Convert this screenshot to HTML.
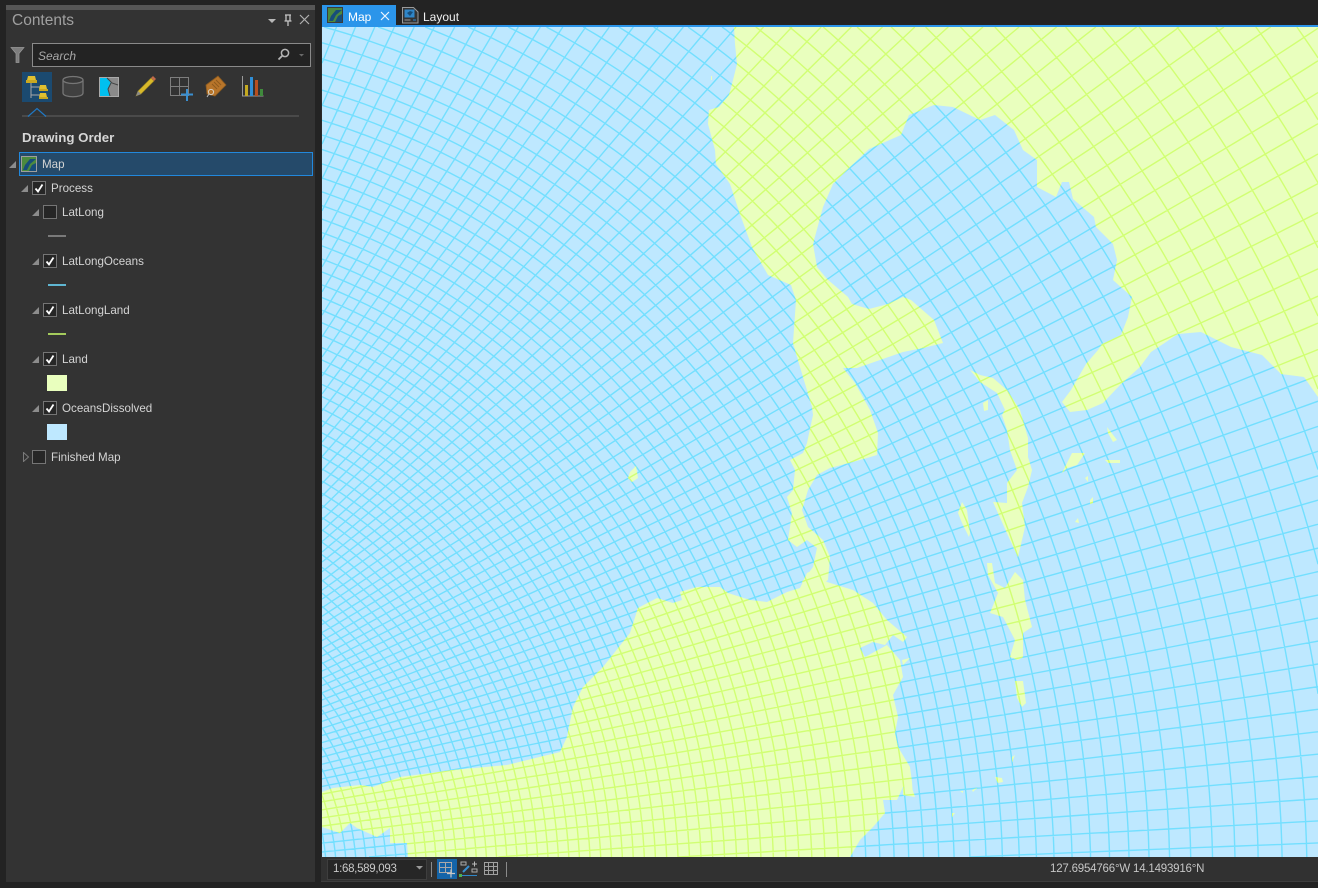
<!DOCTYPE html>
<html><head><meta charset="utf-8"><title>Contents</title>
<style>
html,body{margin:0;padding:0;background:#232323;width:1318px;height:888px;overflow:hidden;}
#root{position:relative;width:1318px;height:888px;overflow:hidden;background:#232323;font-family:"Liberation Sans",sans-serif;font-size:11.6px;color:#d4d4d4;}
.a{position:absolute;}
.t{position:absolute;white-space:nowrap;line-height:16px;}
.cb{position:absolute;width:12px;height:12px;border:1px solid #757575;background:#262626;}
.cb svg{position:absolute;left:0;top:0;}
.exp{position:absolute;width:0;height:0;border-style:solid;border-width:0 0 7px 7px;border-color:transparent transparent #8c8c8c transparent;}
</style></head>
<body><div id="root">
<!-- panel -->
<div class="a" style="left:6px;top:5px;width:309px;height:877px;background:#333333;"></div>
<div class="a" style="left:6px;top:5px;width:309px;height:5px;background:#565656;"></div>
<div class="t" style="left:12px;top:13px;font-size:15.5px;color:#a0a0a0;">Contents</div>
<svg class="a" style="left:266px;top:12px;" width="48" height="16" viewBox="0 0 48 16">
<path d="M2 7h8l-4 4z" fill="#b8b8b8"/>
<path d="M19 3h6M20 3v6M24 3v6M18.500 9h7M22 9v5" stroke="#c4c4c4" stroke-width="1.300" fill="none"/>
<path d="M34 3l9 9M43 3l-9 9" stroke="#b0b0b0" stroke-width="1.200" fill="none"/>
</svg>
<!-- filter + search -->
<svg class="a" style="left:10px;top:46px;" width="16" height="18" viewBox="0 0 16 18"><path d="M1 1.500h13l-5 6v9h-3v-9z" fill="#7d7d7d" stroke="#9a9a9a" stroke-width=".7"/></svg>
<div class="a" style="left:32px;top:43px;width:277px;height:22px;background:#232323;border:1px solid #8a8a8a;"></div>
<div class="t" style="left:38px;top:48px;font-style:italic;color:#a8a8a8;font-size:12px;">Search</div>
<svg class="a" style="left:276px;top:47px;" width="32" height="16" viewBox="0 0 32 16"><circle cx="9" cy="6" r="3.600" fill="none" stroke="#b5b5b5" stroke-width="1.500"/><path d="M6.500 8.500l-4 4" stroke="#b5b5b5" stroke-width="1.800"/><path d="M23 7h5l-2.500 2.500z" fill="#6a6a6a"/></svg>
<!-- icon row -->
<div class="a" style="left:22px;top:72px;width:30px;height:30px;background:#1b4a70;"></div>
<svg class="a" style="left:22px;top:72px;" width="250" height="30" viewBox="0 0 250 30">
<path d="M9 9v19M9 17h9M9 25h9" stroke="#a8a8a8" stroke-width="1" fill="none" transform="translate(0,-2)"/>
<path d="M5 8l1-4h7l1 4z" fill="#e0c030"/><path d="M4 8h11v3H4z" fill="#c9a820"/>
<path d="M17 17l1-4h6l1 4z" fill="#e0c030"/><path d="M17 17h9v2h-9z" fill="#c9a820"/>
<path d="M17 25l1-4h6l1 4z" fill="#e0c030"/><path d="M17 25h9v2h-9z" fill="#c9a820"/>
<!-- db -->
<path d="M41 8v13c0 5 20 5 20 0V8" fill="#404040" stroke="#767676" stroke-width="1.300"/>
<ellipse cx="51" cy="8" rx="10" ry="3.500" fill="#383838" stroke="#767676" stroke-width="1.300"/>
<!-- source -->
<rect x="77.500" y="5.500" width="19" height="19" fill="#8a8a8a" stroke="#aaaaaa"/>
<path d="M78 6h8l3 6-3 5 2 7H78z" fill="#00c0f0"/>
<path d="M85 6l5 5 6 2M89 11l-3 6 2 7" stroke="#444" stroke-width="1" fill="none"/>
<!-- pencil -->
<path d="M114 24l2-5 13-13 3 3-13 13z" fill="#d9b92a" stroke="#8c7a20" stroke-width=".6"/>
<path d="M129 6l2-2 3 3-2 2z" fill="#c06a4a"/><path d="M114 24l2-5 3 3z" fill="#8a8a8a"/>
<!-- grid plus -->
<path d="M148.500 5.500h18v18h-18zM148.500 14.500h18M157.500 5.500v18" stroke="#7e7e7e" stroke-width="1" fill="#333"/>
<path d="M159 23.500h12M165 18v12" stroke="#3a8fd0" stroke-width="2" fill="none" transform="translate(0,-1)"/>
<!-- tag -->
<path d="M184 14l12-9 8 9-11 11-8-2z" fill="#b8752a" stroke="#8a5a20" stroke-width=".8" transform="translate(0,-1)"/>
<path d="M192 10l5 5M190 12l5 5M194 8l5 5" stroke="#8f5a1e" stroke-width="1"/>
<circle cx="189" cy="20" r="2.600" fill="none" stroke="#d8d0c0" stroke-width="1"/><path d="M187 22l-2 3" stroke="#bbb" stroke-width="1"/>
<!-- chart -->
<path d="M220.500 4v20h21" stroke="#9a9a9a" stroke-width="1" fill="none"/>
<rect x="223" y="13" width="3" height="11" fill="#c4a920"/><rect x="228" y="5" width="3" height="19" fill="#2f8fd8"/><rect x="233" y="8" width="3" height="16" fill="#b84f20"/><rect x="238" y="17" width="3" height="7" fill="#3f8a3c"/>
</svg>
<div class="a" style="left:22px;top:115px;width:277px;height:2px;background:#4a4a4a;"></div>
<svg class="a" style="left:26px;top:105px;" width="22" height="13" viewBox="0 0 22 13"><path d="M2 11.500l9-8 9 8" fill="#333" stroke="#1f78c4" stroke-width="1.200"/></svg>
<div class="t" style="left:22px;top:130px;font-size:13.300px;font-weight:bold;color:#d6d6d6;">Drawing Order</div>
<!-- tree -->
<div class="a" style="left:19px;top:152px;width:292px;height:22px;background:#254a6a;border:1px solid #2288dc;"></div>
<div class="exp" style="left:9px;top:161px;"></div>
<svg class="a" style="left:21px;top:156px;" width="17" height="17" viewBox="0 0 17 17"><rect x=".5" y=".5" width="15" height="15" fill="#4c8a3f" stroke="#9e9e9e"/><path d="M15 3L9 8 6 14H2L4 9l5-6z" fill="#174d7a"/><path d="M11 9l4-2v8h-7z" fill="#174d7a"/></svg>
<div class="t" style="left:42px;top:157px;">Map</div>

<div class="exp" style="left:21px;top:185px;"></div>
<div class="cb" style="left:32px;top:181px;"><svg width="12" height="12" viewBox="0 0 12 12"><path d="M2.500 6.500l2.500 3 4.500-7" stroke="#fff" stroke-width="1.800" fill="none"/></svg></div>
<div class="t" style="left:51px;top:181px;">Process</div>

<div class="exp" style="left:32px;top:209px;"></div>
<div class="cb" style="left:43px;top:205px;"></div>
<div class="t" style="left:62px;top:205px;">LatLong</div>
<div class="a" style="left:48px;top:235px;width:18px;height:2px;background:#7a7a7a;"></div>

<div class="exp" style="left:32px;top:258px;"></div>
<div class="cb" style="left:43px;top:254px;"><svg width="12" height="12" viewBox="0 0 12 12"><path d="M2.500 6.500l2.500 3 4.500-7" stroke="#fff" stroke-width="1.800" fill="none"/></svg></div>
<div class="t" style="left:62px;top:254px;">LatLongOceans</div>
<div class="a" style="left:48px;top:284px;width:18px;height:2px;background:#5fb6d2;"></div>

<div class="exp" style="left:32px;top:307px;"></div>
<div class="cb" style="left:43px;top:303px;"><svg width="12" height="12" viewBox="0 0 12 12"><path d="M2.500 6.500l2.500 3 4.500-7" stroke="#fff" stroke-width="1.800" fill="none"/></svg></div>
<div class="t" style="left:62px;top:303px;">LatLongLand</div>
<div class="a" style="left:48px;top:333px;width:18px;height:2px;background:#a4cb5c;"></div>

<div class="exp" style="left:32px;top:356px;"></div>
<div class="cb" style="left:43px;top:352px;"><svg width="12" height="12" viewBox="0 0 12 12"><path d="M2.500 6.500l2.500 3 4.500-7" stroke="#fff" stroke-width="1.800" fill="none"/></svg></div>
<div class="t" style="left:62px;top:352px;">Land</div>
<div class="a" style="left:47px;top:375px;width:20px;height:16px;background:#E9FFBE;"></div>

<div class="exp" style="left:32px;top:405px;"></div>
<div class="cb" style="left:43px;top:401px;"><svg width="12" height="12" viewBox="0 0 12 12"><path d="M2.500 6.500l2.500 3 4.500-7" stroke="#fff" stroke-width="1.800" fill="none"/></svg></div>
<div class="t" style="left:62px;top:401px;">OceansDissolved</div>
<div class="a" style="left:47px;top:424px;width:20px;height:16px;background:#BEE8FF;"></div>

<svg class="a" style="left:22px;top:452px;" width="8" height="10" viewBox="0 0 8 10"><path d="M1.500 .5l5 4.500-5 4.500z" fill="#333" stroke="#7a7a7a"/></svg>
<div class="cb" style="left:32px;top:450px;"></div>
<div class="t" style="left:51px;top:450px;">Finished Map</div>

<!-- tabs -->
<div class="a" style="left:322px;top:5px;width:74px;height:20px;background:#2b95ea;"></div>
<div class="a" style="left:322px;top:25px;width:996px;height:2px;background:#2b95ea;"></div>
<svg class="a" style="left:327px;top:7px;" width="16" height="16" viewBox="0 0 16 16"><rect x=".5" y=".5" width="15" height="15" fill="#4c8a3f" stroke="#3c3c3c" stroke-width="1"/><path d="M15 3L9 8 6 14H2L4 9l5-6z" fill="#174d7a"/><path d="M11 9l4-2v8h-7z" fill="#174d7a"/></svg>
<div class="t" style="left:348px;top:9px;color:#fff;font-size:12px;">Map</div>
<svg class="a" style="left:380px;top:11px;" width="10" height="10" viewBox="0 0 10 10"><path d="M1 1l8 8M9 1l-8 8" stroke="#eaf4ff" stroke-width="1.200"/></svg>
<svg class="a" style="left:402px;top:7px;" width="17" height="17" viewBox="0 0 17 17"><path d="M.5.500h11l4.500 4.500v11H.5z" fill="#333" stroke="#9a9a9a"/><rect x="2.500" y="2.500" width="10" height="8" fill="#2f86c8"/><path d="M5 6l3-2 3 1-3 4z" fill="#174d7a"/><path d="M2.500 13h6" stroke="#999"/><path d="M11 13h3" stroke="#2f86c8"/></svg>
<div class="t" style="left:423px;top:9px;color:#f0f0f0;font-size:12px;">Layout</div>

<!-- map -->
<svg id="map" class="a" style="left:322px;top:27px;" width="996" height="830" viewBox="322 27 996 830">
<defs><clipPath id="lc">
<polygon points="734,27 735,44 737,64 732,84 729,95 719,107 709,110 708,124 715,150 716,164 730,184 741,217 752,247 768,275 791,285 796,300 793,343 800,367 812,407 813,415 807,443 803,453 790,460 795,470 793,490 787,497 792,513 790,527 788,540 797,547 807,540 817,548 813,567 802,582 812,590 828,580 830,557 823,540 808,527 802,510 808,490 817,475 830,468 860,460 877,455 878,433 870,410 855,383 843,368 857,368 880,360 903,352 923,348 943,343 934,320 911,300 903,297 888,304 869,309 852,304 848,297 827,279 817,267 813,244 823,207 833,184 850,167 869,149 901,135 909,115 934,105 953,107 980,120 995,115 1014,130 1023,150 1037,160 1037,187 1056,197 1062,182 1069,182 1073,199 1094,217 1096,227 1113,244 1117,260 1113,280 1132,297 1128,317 1121,335 1102,344 1098,350 1086,364 1071,390 1062,402 1070,412 1087,410 1103,403 1121,384 1140,367 1151,352 1178,334 1201,332 1231,347 1262,355 1281,374 1304,377 1318,397 1318,27"/>
<polygon points="322,792 333,788 360,785 373,787 400,777 453,770 507,765 560,752 567,737 573,707 583,687 603,667 630,633 638,608 657,598 673,603 682,600 680,592 697,587 720,587 728,593 750,600 767,602 787,592 800,588 807,573 813,570 827,582 853,590 873,603 887,620 907,637 903,642 893,635 885,645 873,642 860,648 865,657 887,645 900,660 903,677 893,695 898,717 895,733 898,747 910,767 912,782 913,797 903,787 897,800 883,800 885,813 873,827 860,840 850,857 408,857 407,843 390,843 390,828 377,837 357,828 350,823 340,833 322,827"/>
<polygon points="970,370 980,375 993,378 1007,390 1020,410 1028,438 1028,457 1032,470 1028,487 1022,503 1025,527 1018,557 1010,540 993,502 1007,503 1007,483 1017,470 1010,450 1007,430 1002,415 1005,410 997,393 980,382"/>
<polygon points="983,403 988,400 988,410 984,411"/>
<polygon points="962,502 967,510 970,533 969,537 962,523 958,513"/>
<polygon points="987,563 992,563 995,583 1005,588 1015,572 1023,580 1025,600 1032,627 1023,633 1023,657 1018,660 1010,657 1015,640 1003,617 990,613 998,593 988,575"/>
<polygon points="1015,681 1023,681 1026,703 1022,707 1017,698"/>
<polygon points="1072,453 1085,453 1077,465 1067,468 1062,473 1065,467"/>
<polygon points="1107,427 1117,440 1113,442 1108,433"/>
<polygon points="1105,460 1120,460 1120,463 1108,463"/>
<polygon points="995,777 1002,778 1003,782 998,783"/>
<polygon points="972,790 977,788 973,792"/>
<polygon points="960,791 963,791 963,793"/>
<polygon points="952,813 955,813 952,817"/>
<polygon points="903,788 912,788 915,797 903,795"/>
<polygon points="1012,757 1015,755 1012,762"/>
<polygon points="902,660 910,658 903,665"/>
<polygon points="630,472 636,466 638,478 632,482 628,478"/>
<polygon points="711,76 712,76 712,80 711,80"/>
<polygon points="1090,500 1093,497 1093,503 1090,504"/>
<polygon points="1075,522 1078,518 1079,523"/>
<polygon points="1085,478 1088,476 1088,482"/>
</clipPath></defs>
<rect x="322" y="27" width="996" height="830" fill="#BEE8FF"/>
<path id="gridA" fill="none" stroke="#73DFFF" stroke-width="1.400"/>
<rect x="322" y="27" width="996" height="830" fill="#E9FFBE" clip-path="url(#lc)"/>
<path id="gridB" fill="none" stroke="#D1FF73" stroke-width="1.400" clip-path="url(#lc)"/>
</svg>
<script>
(function(){
var px=84,py=880,d="",L=322,R=1318,T=27,B=857;
function clip(x0,y0,x1,y1){
 var a=0,b=1,dx=x1-x0,dy=y1-y0,P=[-dx,dx,-dy,dy],Q=[x0-L,R-x0,y0-T,B-y0];
 for(var i=0;i<4;i++){
  if(P[i]===0){if(Q[i]<0)return null;}
  else{var r=Q[i]/P[i];
   if(P[i]<0){if(r>b)return null;if(r>a)a=r;}
   else{if(r<a)return null;if(r<b)b=r;}}
 }
 return [x0+a*dx,y0+a*dy,x0+b*dx,y0+b*dy];
}
function add(p){
 var open=false;
 for(var i=1;i<p.length;i++){
  var c=clip(p[i-1][0],p[i-1][1],p[i][0],p[i][1]);
  if(!c){open=false;continue;}
  if(!open)d+="M"+c[0].toFixed(1)+" "+c[1].toFixed(1);
  d+="L"+c[2].toFixed(1)+" "+c[3].toFixed(1);
  open=(c[2]===p[i][0]&&c[3]===p[i][1]);
 }
}
function s(r){var x=r+84-400;if(x<0)x=0;return 10+1.82e-5*x*x;}
var rs=[],r=1223;
while(r<1650){rs.push(r);r+=s(r);}
r=1223;
while(r>120){r-=s(r-8);rs.push(r);}
rs.forEach(function(Q){
 var p=[],st=10/Q;
 for(var a=-0.4;a<=1.95;a+=st)p.push([px+Q*Math.cos(a),py-Q*Math.sin(a)]);
 add(p);
});
function g(r){return 1-Math.exp(-r/400);}
var t0=5,A=18;
for(var k=-6;k<92;k++){
 var U=1.87+k*(0.974+0.0012*k),u=U-t0,h=u>0?A*(1-Math.exp(-u/A)):u,p=[];
 for(var q=120;q<=1700;q+=14){
  var th=U+h*(1/g(q)-1);
  if(th>110||th<-40)continue;
  var a=th*Math.PI/180;
  p.push([px+q*Math.cos(a),py-q*Math.sin(a)]);
 }
 if(p.length>1)add(p);
}
document.getElementById("gridA").setAttribute("d",d);
document.getElementById("gridB").setAttribute("d",d);
})();
</script>

<!-- status bar -->
<div class="a" style="left:321px;top:27px;width:1px;height:855px;background:#2a2a2a;"></div>
<div class="a" style="left:321px;top:857px;width:997px;height:25px;background:#313131;"></div>
<div class="a" style="left:321px;top:881px;width:997px;height:1px;background:#3e3e3e;"></div>
<div class="a" style="left:327px;top:859px;width:98px;height:19px;background:#262626;border:1px solid #3e3e3e;"></div>
<div class="t" style="left:333px;top:861px;color:#c9c9c9;font-size:11.5px;letter-spacing:-.3px;">1:68,589,093</div>
<svg class="a" style="left:415px;top:865px;" width="10" height="6" viewBox="0 0 10 6"><path d="M1 1h7L4.500 4.500z" fill="#9a9a9a"/></svg>
<div class="a" style="left:431px;top:862px;width:1px;height:15px;background:#8a8a8a;"></div>
<div class="a" style="left:437px;top:859px;width:20px;height:20px;background:#1464a8;"></div>
<svg class="a" style="left:437px;top:859px;" width="70" height="20" viewBox="0 0 70 20">
<path d="M2.500 3.500h12v10h-12zM2.500 8.500h12M8.500 3.500v10" stroke="#a9a9a9" fill="none"/>
<path d="M10 14.500h8M14 10.500v8" stroke="#c8c8c8" stroke-width="1.200"/>
<rect x="24" y="3" width="5" height="3" fill="none" stroke="#aaa"/><rect x="35" y="10" width="5" height="3" fill="none" stroke="#aaa"/>
<path d="M26 13l6-6" stroke="#3a8fd0" stroke-width="2"/><path d="M35 5h5M37.500 2.500v5" stroke="#bbb"/>
<path d="M24 16.500h16" stroke="#2f86c8"/><rect x="22" y="15" width="3" height="3" fill="#4caf50"/>
<path d="M47.500 3.500h13v12h-13zM47.500 7.500h13M47.500 11.500h13M51.500 3.500v12M56.500 3.500v12" stroke="#a0a0a0" fill="none"/>
</svg>
<div class="a" style="left:506px;top:862px;width:1px;height:15px;background:#8a8a8a;"></div>
<div class="t" style="left:1050px;top:861px;color:#c6c6c6;font-size:11.5px;letter-spacing:-.2px;">127.6954766°W 14.1493916°N</div>
</div></body></html>
